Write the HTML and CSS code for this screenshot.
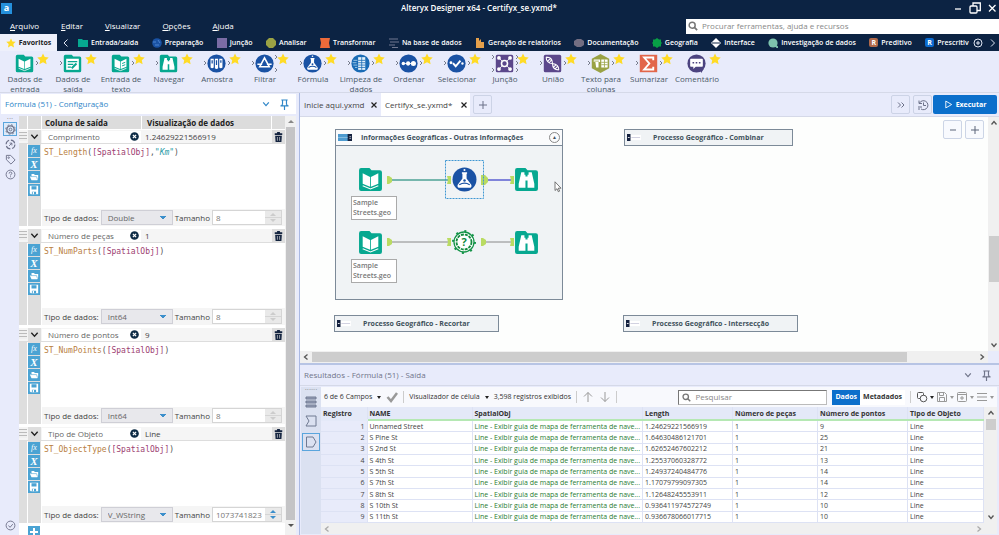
FILE: index.html
```html
<!DOCTYPE html>
<html lang="pt-BR">
<head>
<meta charset="utf-8">
<title>Alteryx Designer x64 - Certifyx_se.yxmd*</title>
<link rel="stylesheet" href="styles.css">
</head>
<body>
<svg class="sprite" aria-hidden="true">
  <symbol id="star" viewBox="0 0 12 12"><path fill="#ffdb26" d="M6 .5 7.7 4.1 11.7 4.6 8.8 7.3 9.6 11.3 6 9.3 2.4 11.3 3.2 7.3.3 4.6 4.3 4.1z"/></symbol>
  <symbol id="search" viewBox="0 0 12 12"><circle cx="5" cy="5" r="3.6" fill="none" stroke="#777" stroke-width="1.8"/><path d="M7.7 7.7 11 11" stroke="#777" stroke-width="2"/></symbol>
  <symbol id="folder" viewBox="0 0 24 24"><path fill="#06a890" d="M1 3q0-2 2-2h8l2 2h8q2 0 2 2v16q0 2-2 2H3q-2 0-2-2z"/></symbol>
  <symbol id="book" viewBox="0 0 24 24"><use href="#folder"/><path fill="#fff" d="M4.500 6 11.600 9.500V19L4.500 16zM19.500 6l-7.100 3.500V19l7.100-3z"/><path d="M4.500 18 12 21l7.500-3" fill="none" stroke="#fff"/></symbol>
  <symbol id="write" viewBox="0 0 24 24"><use href="#folder"/><path fill="#fff" d="M4 6h16v14H4z"/><path d="M6 9.500h12M6 13h7M6 16.500h4" stroke="#06a890" stroke-width="1.600"/><path d="m11 18 6-6" stroke="#06a890" stroke-width="2.600"/></symbol>
  <symbol id="textin" viewBox="0 0 24 24"><use href="#book"/><path d="M14 12l4-1.500M14 15l4-1.500" stroke="#06a890" stroke-width="1.200"/></symbol>
  <symbol id="binoc" viewBox="0 0 24 24"><use href="#folder"/><path fill="#fff" d="M7 5h3v2.500h1V20H4.500v-4zM14 5h3l2.500 11v4H13V7.500h1zM10.500 9h3v4h-3z"/></symbol>
  <symbol id="sample" viewBox="0 0 24 24"><circle cx="12" cy="12" r="11.500" fill="#1a52a4"/><path fill="#fff" d="M4.500 6h4v11q-2 2-4 0zM10 6h4v12q-2 2-4 0zM15.500 6h4v11q-2 2-4 0z"/><path d="M6.500 8v4M12 8v6M17.500 8v3" stroke="#1a52a4" stroke-width="1.600"/></symbol>
  <symbol id="filter" viewBox="0 0 24 24"><circle cx="12" cy="12" r="11.500" fill="#1a52a4"/><path d="M12 5 18 16H6zM3 13h6M15 13h6" fill="none" stroke="#fff" stroke-width="2"/></symbol>
  <symbol id="flask" viewBox="0 0 24 24"><circle cx="12" cy="12" r="11.500" fill="#1a52a4"/><path fill="#fff" d="M9.500 5h5v1.500H14V11l4.500 6q1 3-2 3h-9q-3 0-2-3L10 11V6.500h-.5z"/><path d="M7 17q5-3 10 0" fill="none" stroke="#1a52a4" stroke-width="1.300"/><circle cx="12" cy="13" r="1.200" fill="#1a52a4"/><circle cx="12" cy="2.800" r="1" fill="#fff"/></symbol>
  <symbol id="cleanse" viewBox="0 0 24 24"><circle cx="12" cy="12" r="11.500" fill="#1a6bb5"/><path fill="#e4f1fa" d="M9 4h9v16H9z"/><path d="M9 8h9M9 11h9M9 14h9M9 17h9M13.500 4v16" stroke="#1a6bb5"/><path d="M3 8h5M2 11h5M3 14h5M5 17h3" stroke="#b8dcf2"/></symbol>
  <symbol id="sort" viewBox="0 0 24 24"><circle cx="12" cy="12" r="11.500" fill="#1a52a4"/><path d="M5 12h14" stroke="#fff"/><circle cx="5.500" cy="12" r="2.200" fill="#fff"/><circle cx="11.500" cy="12" r="2.700" fill="#fff"/><circle cx="18.200" cy="12" r="3.200" fill="#fff"/></symbol>
  <symbol id="select" viewBox="0 0 24 24"><circle cx="12" cy="12" r="11.500" fill="#1a52a4"/><circle cx="5" cy="11" r="1.800" fill="#fff"/><circle cx="19.500" cy="12" r="1.500" fill="#fff"/><path d="m7.500 11.500 3.500 4 6-7" fill="none" stroke="#fff" stroke-width="2.500"/></symbol>
  <symbol id="join" viewBox="0 0 24 24"><rect x="1" y="1" width="22" height="22" rx="2" fill="#5b478b"/><path d="m5 5 14 14M19 5 5 19" stroke="#fff"/><circle cx="12" cy="12" r="3.800" fill="#5b478b" stroke="#fff" stroke-width="2"/><g fill="#fff"><circle cx="5" cy="5" r="2.400"/><circle cx="19" cy="5" r="2.400"/><circle cx="5" cy="19" r="2.400"/><circle cx="19" cy="19" r="2.400"/></g></symbol>
  <symbol id="union" viewBox="0 0 24 24"><rect x="1" y="1" width="22" height="22" rx="2" fill="#5b478b"/><path d="M4 4q0 7 8 8t8 8M4 4q8 0 8 8t8 8M6 9l4-4M8 11l3-4M13 17l4-4M15 19l4-4" fill="none" stroke="#fff" stroke-width="1.400"/></symbol>
  <symbol id="columns" viewBox="0 0 24 24"><path fill="#9aa244" d="M12 0 23 6v12l-11 6L1 18V6z"/><path fill="#fff" d="M3.500 7h8v3h-2v7h-3l-1-7h-2zM13 7h8v10h-8z"/><path d="M13 10.500h8M13 13.500h8M17 7v10M4 9h6" stroke="#9aa244"/></symbol>
  <symbol id="sum" viewBox="0 0 24 24"><path fill="#e2664b" d="M1 1h22v22H1z"/><path d="M18 8V4.500H6.500L13 12l-6.500 7.500H18V16" fill="none" stroke="#fff" stroke-width="2.400"/></symbol>
  <symbol id="comment" viewBox="0 0 24 24"><circle cx="12" cy="12" r="11.500" fill="#4c4480"/><path fill="#fff" d="M5 6h14q1 0 1 1v8q0 1-1 1H11l-3 3v-3H5q-1 0-1-1V7q0-1 1-1z"/><path d="M7 11h2M11 11h2M15 11h2" stroke="#4c4480" stroke-width="2"/><path d="M16 19h5l-3 5z" fill="#4c4480"/></symbol>
  <symbol id="anchor" viewBox="0 0 4 6"><path d="m1 1 2 2-2 2" fill="none" stroke="#777c8c"/></symbol>
  <symbol id="chev" viewBox="0 0 10 10"><path d="m1.500 3 3.500 4 3.500-4" fill="none" stroke="currentColor" stroke-width="1.500"/></symbol>
  <symbol id="pin" viewBox="0 0 10 12"><path d="M1.500 1h7M2.800 1v5M7.200 1v5M.5 7.500h9M2.800 6 1.500 7.500M7.200 6l1.300 1.500M5 7.500V12" fill="none" stroke="currentColor" stroke-width="1.300"/></symbol>
  <symbol id="trash" viewBox="0 0 10 12"><path fill="#13233f" d="M3.500 0h3l.5 1.500h2.500V3.500h-9V1.500H3zM1 4.500h8L8.500 12h-7z"/><path d="M3.700 6v4.500M6.300 6v4.500" stroke="#ddd" stroke-width=".8"/></symbol>
  <symbol id="clear" viewBox="0 0 10 10"><circle cx="5" cy="5" r="4.800" fill="#0d2b45"/><path d="m3.200 3.200 3.600 3.600M6.800 3.200 3.200 6.800" stroke="#fff" stroke-width="1.400"/></symbol>
  <symbol id="open" viewBox="0 0 12 12"><path fill="#fff" d="M3 2.500h3l1 1h4v4l-1 2.500H3L1 5.500h2z"/><path d="M2 5.500h7l1 3" fill="none" stroke="#4ba3d3" stroke-width=".7"/></symbol>
  <symbol id="save" viewBox="0 0 12 12"><path fill="#fff" d="M1 1h10v10H2l-1-1z"/><path fill="#4ba3d3" d="M3 1.500h6v4H3zM3.500 8h5v3h-5z"/><path fill="#fff" d="M4.500 8.500h1.500V11H4.500z"/></symbol>
  <symbol id="collapse" viewBox="0 0 16 8"><path fill="#4d9bd0" d="M0 0h16v8H0z"/><path fill="#14213f" d="M11 0h5v8h-5z"/><path d="M0 4h11" stroke="#a9d3ec" stroke-width=".7"/><path d="M13 3h2M13 5h2" stroke="#fff" stroke-width=".7"/></symbol>
  <symbol id="closed" viewBox="0 0 16 8"><path fill="#fff" d="M4 1h12v6H4z"/><path fill="#14213f" d="M0 0h4v8H0z"/><path d="M5 4h10" stroke="#ccd"/><path d="M1 4h2" stroke="#fff"/></symbol>
</svg>

<div class="app">
  <header class="top">
    <div class="titlebar">
      <span class="logo">a</span>
      <h1>Alteryx Designer x64 - Certifyx_se.yxmd*</h1>
      <div class="win">
        <button aria-label="Minimizar"><svg viewBox="0 0 12 12"><path d="M3 7h6"/></svg></button>
        <button aria-label="Restaurar"><svg viewBox="0 0 12 12"><rect x="1" y="4" width="7" height="7" rx="1"/><path d="M4 4V1h7.300v7.500H8"/></svg></button>
        <button aria-label="Fechar"><svg viewBox="0 0 12 12"><path d="m3 3 6.500 6.500M9.500 3 3 9.500"/></svg></button>
      </div>
    </div>
    <div class="menurow">
      <nav class="menu"><a href="#"><u>A</u>rquivo</a><a href="#"><u>E</u>ditar</a><a href="#"><u>V</u>isualizar</a><a href="#"><u>O</u>pções</a><a href="#"><u>A</u>juda</a></nav>
      <label class="topsearch"><svg><use href="#search"/></svg><input type="text" placeholder="Procurar ferramentas, ajuda e recursos" aria-label="Procurar"></label>
    </div>
    <div class="cats">
      <button class="fav"><svg><use href="#star"/></svg>Favoritos</button>
      <button class="arrow" aria-label="Anterior"><svg viewBox="0 0 10 10"><path d="M6.500 1.500 3 5l3.500 3.500"/></svg></button>
      <div class="catlist">
        <button><svg viewBox="0 0 10 10"><path fill="#06a890" d="M0 1h4l1 1h5v7H0z"/></svg>Entrada/saída</button>
        <button><svg viewBox="0 0 10 10"><circle cx="5" cy="5" r="4.800" fill="#1a52a4"/><path d="M1 4h3M6 2l2 3M3 7h4" stroke="#4d84cf"/></svg>Preparação</button>
        <button><svg viewBox="0 0 10 10"><path fill="#7a6ca5" d="M0 0h10v10H0z"/></svg>Junção</button>
        <button><svg viewBox="0 0 10 10"><path fill="#9aa244" d="M3 0h4l3 3v4l-3 3H3L0 7V3z"/></svg>Analisar</button>
        <button><svg viewBox="0 0 10 10"><path fill="#ec6a3a" d="M0 0h10l-1 5 1 5H0l1-5z"/></svg>Transformar</button>
        <button><svg viewBox="0 0 10 10"><path d="M0 1h9M1 4h9M0 7h6M3 9.500h6" stroke="#707891" stroke-width="1.200"/></svg>Na base de dados</button>
        <button><svg viewBox="0 0 10 10"><path fill="#e5a04b" d="M1 0h3v3l2-2v3h3v6H1z"/></svg>Geração de relatórios</button>
        <button><svg viewBox="0 0 10 10"><path fill="#736e82" d="M3 1h4l3 2v4L7 9H3L0 7V3z"/></svg>Documentação</button>
        <button><svg viewBox="0 0 10 10"><path fill="#08a046" d="m5 0 2 1.500h2V4l1 1-1 1v2.500H7L5 10 3 8.500H1V6L0 5l1-1V1.500h2z"/></svg>Geografia</button>
        <button><svg viewBox="0 0 10 10"><path fill="#fff" d="m5 0 4 4H1zM5 10 1 6h8zM0 4h10v.6H0zM0 5.600h10v.5H0z"/></svg>Interface</button>
        <button><svg viewBox="0 0 10 10"><circle cx="5" cy="5" r="4.600" fill="#7dc3ae"/><path d="m7 7 3 3" stroke="#7dc3ae" stroke-width="2"/></svg>Investigação de dados</button>
        <button><span class="rmark brown">R</span>Preditivo</button>
        <button><span class="rmark blue">R</span>Prescritiv</button>
      </div>
      <button class="arrow" aria-label="Adicionar"><svg viewBox="0 0 10 10"><circle cx="5" cy="5" r="4"/><path d="M5 3v4M3 5h4"/></svg></button>
      <button class="arrow last" aria-label="Próximo"><svg viewBox="0 0 10 10"><path d="M3 1.500 6.500 5 3 8.500"/></svg></button>
    </div>
  </header>

  <div class="ribbon">
    <button class="tool"><svg viewBox="0 0 48 22"><use href="#book" x="14" y="2" width="19" height="19"/><use href="#anchor" x="34" y="8" width="4" height="6"/><use href="#star" x="36" y="1" width="12" height="12"/></svg>Dados de<br>entrada</button>
    <button class="tool"><svg viewBox="0 0 48 22"><use href="#anchor" x="10" y="8" width="4" height="6"/><use href="#write" x="14" y="2" width="19" height="19"/><use href="#star" x="36" y="1" width="12" height="12"/></svg>Dados de<br>saída</button>
    <button class="tool"><svg viewBox="0 0 48 22"><use href="#textin" x="14" y="2" width="19" height="19"/><use href="#anchor" x="34" y="8" width="4" height="6"/><use href="#star" x="36" y="1" width="12" height="12"/></svg>Entrada de<br>texto</button>
    <button class="tool"><svg viewBox="0 0 48 22"><use href="#anchor" x="10" y="8" width="4" height="6"/><use href="#binoc" x="14" y="2" width="19" height="19"/><use href="#star" x="36" y="1" width="12" height="12"/></svg>Navegar</button>
    <button class="tool"><svg viewBox="0 0 48 22"><use href="#anchor" x="10" y="8" width="4" height="6"/><use href="#sample" x="14" y="2" width="19" height="19"/><use href="#anchor" x="34" y="8" width="4" height="6"/><use href="#star" x="36" y="1" width="12" height="12"/></svg>Amostra</button>
    <button class="tool"><svg viewBox="0 0 48 22"><use href="#anchor" x="10" y="8" width="4" height="6"/><use href="#filter" x="14" y="2" width="19" height="19"/><use href="#anchor" x="33" y="2" width="4" height="6"/><use href="#anchor" x="33" y="15" width="4" height="6"/><use href="#star" x="36" y="1" width="12" height="12"/></svg>Filtrar</button>
    <button class="tool"><svg viewBox="0 0 48 22"><use href="#anchor" x="10" y="8" width="4" height="6"/><use href="#flask" x="14" y="2" width="19" height="19"/><use href="#anchor" x="34" y="8" width="4" height="6"/><use href="#star" x="36" y="1" width="12" height="12"/></svg>Fórmula</button>
    <button class="tool"><svg viewBox="0 0 48 22"><use href="#anchor" x="10" y="8" width="4" height="6"/><use href="#cleanse" x="14" y="2" width="19" height="19"/><use href="#anchor" x="34" y="8" width="4" height="6"/><use href="#star" x="36" y="1" width="12" height="12"/></svg>Limpeza de<br>dados</button>
    <button class="tool"><svg viewBox="0 0 48 22"><use href="#anchor" x="10" y="8" width="4" height="6"/><use href="#sort" x="14" y="2" width="19" height="19"/><use href="#anchor" x="34" y="8" width="4" height="6"/><use href="#star" x="36" y="1" width="12" height="12"/></svg>Ordenar</button>
    <button class="tool"><svg viewBox="0 0 48 22"><use href="#anchor" x="10" y="8" width="4" height="6"/><use href="#select" x="14" y="2" width="19" height="19"/><use href="#anchor" x="34" y="8" width="4" height="6"/><use href="#star" x="36" y="1" width="12" height="12"/></svg>Selecionar</button>
    <button class="tool"><svg viewBox="0 0 48 22"><use href="#anchor" x="10" y="2" width="4" height="6"/><use href="#anchor" x="10" y="15" width="4" height="6"/><use href="#join" x="14" y="2" width="19" height="19"/><use href="#anchor" x="34" y="2" width="4" height="6"/><use href="#anchor" x="34" y="8" width="4" height="6"/><use href="#anchor" x="34" y="15" width="4" height="6"/><use href="#star" x="36" y="1" width="12" height="12"/></svg>Junção</button>
    <button class="tool"><svg viewBox="0 0 48 22"><use href="#anchor" x="10" y="8" width="4" height="6"/><use href="#union" x="14" y="2" width="19" height="19"/><use href="#anchor" x="34" y="8" width="4" height="6"/><use href="#star" x="36" y="1" width="12" height="12"/></svg>União</button>
    <button class="tool"><svg viewBox="0 0 48 22"><use href="#anchor" x="10" y="8" width="4" height="6"/><use href="#columns" x="14" y="2" width="19" height="19"/><use href="#anchor" x="34" y="8" width="4" height="6"/><use href="#star" x="36" y="1" width="12" height="12"/></svg>Texto para<br>colunas</button>
    <button class="tool"><svg viewBox="0 0 48 22"><use href="#anchor" x="10" y="8" width="4" height="6"/><use href="#sum" x="14" y="2" width="19" height="19"/><use href="#anchor" x="34" y="8" width="4" height="6"/><use href="#star" x="36" y="1" width="12" height="12"/></svg>Sumarizar</button>
    <button class="tool"><svg viewBox="0 0 48 22"><use href="#comment" x="14" y="2" width="19" height="19"/><use href="#star" x="36" y="1" width="12" height="12"/></svg>Comentário</button>
  </div>

  <main class="work">
    <section class="config">
      <div class="ptitle"><h2>Fórmula (51) - Configuração</h2><svg class="chevi"><use href="#chev"/></svg><svg class="pini"><use href="#pin"/></svg></div>
      <div class="cbody">
        <div class="rail">
          <span class="dots">···</span>
          <button class="on" aria-label="Configuração"><svg viewBox="0 0 12 12"><circle cx="6" cy="6" r="4" stroke-width="1.500"/><circle cx="6" cy="6" r="5.200" stroke-dasharray="2 2.080"/><circle cx="6" cy="6" r="1.500"/></svg></button>
          <button aria-label="Navegação"><svg viewBox="0 0 12 12"><circle cx="6" cy="6" r="4.800" stroke-dasharray="5.500 2" stroke-width="1.200"/><path d="m4.500 7.500 3-3M5 4.500h2.500V7"/></svg></button>
          <button aria-label="Anotação"><svg viewBox="0 0 12 12"><path d="M1.500 1.500h4.700l4.800 5-4.500 4.500-5-4.800z"/><circle cx="4" cy="4" r=".8"/></svg></button>
          <button aria-label="Ajuda"><svg viewBox="0 0 12 12"><circle cx="6" cy="6" r="4.800"/><path d="M4.500 5q0-1.700 1.500-1.700T7.500 4.800Q7.500 5.800 6 6.300V7M6 8v1"/></svg></button>
          <span class="grow"></span>
          <button aria-label="Concluído"><svg viewBox="0 0 12 12"><circle cx="6" cy="6" r="4.800"/><path d="m3.800 6 1.700 2 3-3.500"/></svg></button>
        </div>
        <div class="formulas">
          <div class="fhead"><span></span><span></span><span>Coluna de saída</span><span>Visualização de dados</span><span></span></div>
          <div class="fblock">
            <div class="frow"><i class="grip"></i><button class="tog" aria-label="Recolher"><svg><use href="#chev"/></svg></button><div class="name"><input type="text" value="Comprimento" aria-label="Coluna de saída"><button aria-label="Limpar"><svg><use href="#clear"/></svg></button></div><output>1.24629221566919</output><button class="del" aria-label="Excluir"><svg><use href="#trash"/></svg></button></div>
            <div class="fedit"><i></i><div class="ftools"><button>fx</button><button class="x">X</button><button aria-label="Abrir"><svg><use href="#open"/></svg></button><button aria-label="Salvar"><svg><use href="#save"/></svg></button></div>
              <div class="fmain"><pre><code><b>ST_Length</b>(<em>[SpatialObj]</em>,<q>"Km"</q>)</code></pre>
                <div class="ftype"><label for="t1">Tipo de dados:</label><select id="t1"><option>Double</option></select><label for="s1">Tamanho</label><span class="spin"><input id="s1" type="text" value="8"><i></i></span></div></div></div>
          </div>
          <div class="fblock">
            <div class="frow"><i class="grip"></i><button class="tog" aria-label="Recolher"><svg><use href="#chev"/></svg></button><div class="name"><input type="text" value="Número de peças" aria-label="Coluna de saída"><button aria-label="Limpar"><svg><use href="#clear"/></svg></button></div><output>1</output><button class="del" aria-label="Excluir"><svg><use href="#trash"/></svg></button></div>
            <div class="fedit"><i></i><div class="ftools"><button>fx</button><button class="x">X</button><button aria-label="Abrir"><svg><use href="#open"/></svg></button><button aria-label="Salvar"><svg><use href="#save"/></svg></button></div>
              <div class="fmain"><pre><code><b>ST_NumParts</b>(<em>[SpatialObj]</em>)</code></pre>
                <div class="ftype"><label for="t2">Tipo de dados:</label><select id="t2"><option>Int64</option></select><label for="s2">Tamanho</label><span class="spin"><input id="s2" type="text" value="8"><i></i></span></div></div></div>
          </div>
          <div class="fblock">
            <div class="frow"><i class="grip"></i><button class="tog" aria-label="Recolher"><svg><use href="#chev"/></svg></button><div class="name"><input type="text" value="Número de pontos" aria-label="Coluna de saída"><button aria-label="Limpar"><svg><use href="#clear"/></svg></button></div><output>9</output><button class="del" aria-label="Excluir"><svg><use href="#trash"/></svg></button></div>
            <div class="fedit"><i></i><div class="ftools"><button>fx</button><button class="x">X</button><button aria-label="Abrir"><svg><use href="#open"/></svg></button><button aria-label="Salvar"><svg><use href="#save"/></svg></button></div>
              <div class="fmain"><pre><code><b>ST_NumPoints</b>(<em>[SpatialObj]</em>)</code></pre>
                <div class="ftype"><label for="t3">Tipo de dados:</label><select id="t3"><option>Int64</option></select><label for="s3">Tamanho</label><span class="spin"><input id="s3" type="text" value="8"><i></i></span></div></div></div>
          </div>
          <div class="fblock">
            <div class="frow"><i class="grip"></i><button class="tog" aria-label="Recolher"><svg><use href="#chev"/></svg></button><div class="name"><input type="text" value="Tipo de Objeto" aria-label="Coluna de saída"><button aria-label="Limpar"><svg><use href="#clear"/></svg></button></div><output>Line</output><button class="del" aria-label="Excluir"><svg><use href="#trash"/></svg></button></div>
            <div class="fedit"><i></i><div class="ftools"><button>fx</button><button class="x">X</button><button aria-label="Abrir"><svg><use href="#open"/></svg></button><button aria-label="Salvar"><svg><use href="#save"/></svg></button></div>
              <div class="fmain"><pre><code><b>ST_ObjectType</b>(<em>[SpatialObj]</em>)</code></pre>
                <div class="ftype"><label for="t4">Tipo de dados:</label><select id="t4"><option>V_WString</option></select><label for="s4">Tamanho</label><span class="spin live"><input id="s4" type="text" value="1073741823"><i></i></span></div></div></div>
          </div>
          <div class="fadd"><i></i><button aria-label="Adicionar coluna"><svg viewBox="0 0 12 12"><path d="M6 2v8M2 6h8" stroke="#fff" stroke-width="2"/></svg></button></div>
        </div>
        <div class="vbar"><i class="up"></i><b></b><i class="down"></i></div>
      </div>
    </section>

    <div class="right">
      <div class="tabs">
        <div class="tab"><a href="#">Inicie aqui.yxmd</a><button aria-label="Fechar"><svg viewBox="0 0 8 8"><path d="m1.500 1.500 5 5M6.500 1.500l-5 5"/></svg></button></div>
        <div class="tab active"><a href="#">Certifyx_se.yxmd*</a><button aria-label="Fechar"><svg viewBox="0 0 8 8"><path d="m1.500 1.500 5 5M6.500 1.500l-5 5"/></svg></button></div>
        <button class="sq" aria-label="Nova aba"><svg viewBox="0 0 12 12"><path d="M6 2v8M2 6h8"/></svg></button>
        <span class="grow"></span>
        <button class="sq" aria-label="Mais"><svg viewBox="0 0 12 12"><path d="m3 3.500 2.500 2.500L3 8.500M6.500 3.500 9 6 6.500 8.500"/></svg></button>
        <button class="sq" aria-label="Histórico"><svg viewBox="0 0 12 12"><path d="M2.500 4A4.500 4.500 0 1 1 4 10M2 1.500v3h3M6.500 3.500V6.500H9M1 8h4M1 10h2"/></svg></button>
        <button class="run"><svg viewBox="0 0 10 10"><path d="M2 1.200 8.500 5 2 8.800z"/></svg>Executar</button>
      </div>
      <div class="canvaswrap">
        <div class="canvas">
          <div class="box open">
            <div class="boxhead"><svg><use href="#collapse"/></svg><h3>Informações Geográficas - Outras Informações</h3><button aria-label="Recolher">▲</button></div>
          </div>
          <svg class="wires" viewBox="0 0 228 170">
            <path d="M55 51h60" stroke="#4ea295" stroke-width="1.500"/><path d="M150 51h26" stroke="#5b5fd0" stroke-width="1.500"/>
            <path d="M55 113h60M150 113h26" stroke="#888"/>
            <g fill="#b9db62"><path d="M51 47h2l3 2v4l-3 2h-2zM111 47h4v8h-4l1-4zM174 47h4v8h-4l1-4zM145 46h4l3 3v4l-3 3h-4zM51 109h2l3 2v4l-3 2h-2zM111 109h4v8h-4l1-4zM174 109h4v8h-4l1-4zM145 109h2l3 2v4l-3 2h-2z"/></g>
            <rect x="109.500" y="31.500" width="38" height="38" fill="none" stroke="#3f97d2" stroke-dasharray="2 1"/>
            <use href="#book" x="22" y="38" width="25" height="25"/><use href="#book" x="22" y="101" width="25" height="25"/>
            <use href="#flask" x="116" y="38" width="25" height="25"/>
            <use href="#binoc" x="178" y="38" width="25" height="25"/><use href="#binoc" x="178" y="101" width="25" height="25"/>
            <circle cx="128" cy="113" r="10" fill="#fff" stroke="#159449" stroke-width="1.300"/><circle cx="128" cy="113" r="11" fill="none" stroke="#159449" stroke-width="2" stroke-dasharray="2 6.640"/><circle cx="128" cy="113" r="7.500" fill="none" stroke="#128a3e" stroke-width="1.800" stroke-dasharray="3 1"/>
            <text x="128" y="117" text-anchor="middle" class="q">?</text>
          </svg>
          <div class="note n1">Sample<br>Streets.geo</div>
          <div class="note n2">Sample<br>Streets.geo</div>
          <div class="box b1"><svg><use href="#closed"/></svg><h3>Processo Geográfico - Combinar</h3></div>
          <div class="box b2"><svg><use href="#closed"/></svg><h3>Processo Geográfico - Recortar</h3></div>
          <div class="box b3"><svg><use href="#closed"/></svg><h3>Processo Geográfico - Intersecção</h3></div>
          <div class="zoomer"><button aria-label="Diminuir"><svg viewBox="0 0 12 12"><path d="M3 6h6"/></svg></button><button aria-label="Aumentar"><svg viewBox="0 0 12 12"><path d="M6 2v8M2 6h8"/></svg></button></div>
          <svg class="cursor" viewBox="0 0 8 12"><path d="M1 .8v8.700l2-1.800 1.300 3 1.300-.6-1.300-2.900H7z" fill="#fff" stroke="#555" stroke-width=".8"/></svg>
        </div>
        <div class="cv"><svg viewBox="0 0 8 8"><path d="m1.500 5.500 2.500-3 2.500 3"/></svg><b></b><svg viewBox="0 0 8 8"><path d="m1.500 2.500 2.500 3 2.500-3"/></svg></div>
        <div class="ch"><svg viewBox="0 0 8 8"><path d="M5.500 1.500 2.500 4l3 2.500"/></svg><b></b><svg viewBox="0 0 8 8"><path d="m2.500 1.500 3 2.500-3 2.500"/></svg></div>
      </div>

      <section class="results">
        <div class="rtitle"><h2>Resultados - Fórmula (51) - Saída</h2><svg class="chevi"><use href="#chev"/></svg><svg class="pini"><use href="#pin"/></svg></div>
        <div class="rbody">
          <div class="rrail">
            <span class="dots">······</span>
            <button aria-label="Mensagens"><svg viewBox="0 0 12 12"><path d="M1 1h10v2H1zM1 5h10v2H1zM1 9h10v2H1z" fill="#9aa2bb"/></svg></button>
            <button aria-label="Entrada"><svg viewBox="0 0 12 12"><path d="M1 1h10v10H1l3-5z"/></svg></button>
            <button class="on" aria-label="Saída"><svg viewBox="0 0 12 12"><path d="M1.500 1H8l3 5-3 5H1.500z"/></svg></button>
          </div>
          <div class="rmain">
            <div class="rbar">
              <button>6 de 6 Campos</button><i class="car"></i>
              <svg class="ok" viewBox="0 0 12 12"><path d="m1.500 6 3.500 4 6-8" stroke="#999" stroke-width="2.500"/></svg><s></s>
              <button>Visualizador de célula</button><i class="car"></i>
              <span>3,598 registros exibidos</span><s></s>
              <svg viewBox="0 0 12 12"><path d="M6 11V1.500M2 5.500l4-4 4 4"/></svg><svg viewBox="0 0 12 12"><path d="M6 1v9.500M2 6.500l4 4 4-4"/></svg><s></s>
              <span class="grow"></span>
              <label class="rsearch"><svg><use href="#search"/></svg><input type="text" placeholder="Pesquisar" aria-label="Pesquisar"></label>
              <div class="seg"><button class="sel">Dados</button><button>Metadados</button></div><s></s>
              <div class="acts">
                <svg class="dark" viewBox="0 0 12 12"><rect x="1.500" y="1.500" width="6" height="6" rx="1"/><circle cx="7.500" cy="7.500" r="3.300" fill="#f8f9fd"/></svg><i class="car"></i>
                <svg viewBox="0 0 12 12"><path d="M1.500 1.500h7l2 2v7h-9zM3.500 1.500v3h4v-3M3.500 10.500v-4h5v4"/></svg><i class="car dim"></i>
                <svg viewBox="0 0 12 12"><rect x="1.500" y="1.500" width="9" height="9" rx="1"/><path d="M1.500 3.500h9M6 5v4M4 7h4"/></svg><i class="car dim"></i>
                <svg viewBox="0 0 12 12"><path d="M1 2.500h10M1 6h10M1 9.500h10"/></svg><i class="car dim"></i>
              </div>
            </div>
            <div class="grid">
              <table>
                <colgroup><col class="c0"><col class="c1"><col class="c2"><col class="c3"><col class="c4"><col class="c5"><col class="c6"></colgroup>
                <thead><tr><th>Registro</th><th>NAME</th><th>SpatialObj</th><th>Length</th><th>Número de peças</th><th>Número de pontos</th><th>Tipo de Objeto</th></tr></thead>
                <tbody>
                <tr><td>1</td><td>Unnamed Street</td><td>Line - Exibir guia de mapa de ferramenta de nave...</td><td>1.24629221566919</td><td>1</td><td>9</td><td>Line</td></tr>
                <tr><td>2</td><td>S Pine St</td><td>Line - Exibir guia de mapa de ferramenta de nave...</td><td>1.64630486121701</td><td>1</td><td>25</td><td>Line</td></tr>
                <tr><td>3</td><td>S 2nd St</td><td>Line - Exibir guia de mapa de ferramenta de nave...</td><td>1.62652467602212</td><td>1</td><td>21</td><td>Line</td></tr>
                <tr><td>4</td><td>S 4th St</td><td>Line - Exibir guia de mapa de ferramenta de nave...</td><td>1.25537060328772</td><td>1</td><td>13</td><td>Line</td></tr>
                <tr><td>5</td><td>S 5th St</td><td>Line - Exibir guia de mapa de ferramenta de nave...</td><td>1.24937240484776</td><td>1</td><td>14</td><td>Line</td></tr>
                <tr><td>6</td><td>S 7th St</td><td>Line - Exibir guia de mapa de ferramenta de nave...</td><td>1.17079799097305</td><td>1</td><td>14</td><td>Line</td></tr>
                <tr><td>7</td><td>S 8th St</td><td>Line - Exibir guia de mapa de ferramenta de nave...</td><td>1.12648245553911</td><td>1</td><td>12</td><td>Line</td></tr>
                <tr><td>8</td><td>S 10th St</td><td>Line - Exibir guia de mapa de ferramenta de nave...</td><td>0.936411974572749</td><td>1</td><td>10</td><td>Line</td></tr>
                <tr><td>9</td><td>S 11th St</td><td>Line - Exibir guia de mapa de ferramenta de nave...</td><td>0.936678066017715</td><td>1</td><td>10</td><td>Line</td></tr>
                </tbody>
              </table>
              <div class="gv"><svg viewBox="0 0 8 8"><path d="m1.500 5.500 2.500-3 2.500 3"/></svg><b></b><svg viewBox="0 0 8 8"><path d="m1.500 2.500 2.500 3 2.500-3"/></svg></div>
            </div>
            <div class="gh"><svg viewBox="0 0 8 8"><path d="M5.500 1.500 2.500 4l3 2.500"/></svg><svg viewBox="0 0 8 8"><path d="m2.500 1.500 3 2.500-3 2.500"/></svg></div>
          </div>
        </div>
      </section>
    </div>
  </main>
</div>
</body>
</html>
```
FILE: styles.css
```css
* { box-sizing: border-box; }
body { margin: 0; font-family: "Open Sans", "Noto Sans", sans-serif; font-size: 8px; line-height: 10px; color: #444; }
button, input, select { font: inherit; color: inherit; border: 0; padding: 0; margin: 0; background: none; border-radius: 0; min-width: 0; }
button { display: flex; align-items: center; justify-content: center; }
input { outline: 0; width: 100%; }
h1, h2, h3 { margin: 0; font-size: inherit; font-weight: 400; }
a { color: inherit; text-decoration: none; }
svg { display: block; flex: none; width: 12px; height: 12px; fill: none; stroke-width: 1; }
.sprite { position: absolute; width: 0; height: 0; }
.grow { flex: 1; }
.app { display: flex; flex-direction: column; height: 100vh; background: #e8ebfb; }

/* Header */
.top { background: #0c2343; color: #fff; }
.titlebar { display: flex; align-items: center; height: 16px; padding: 0 1px; }
.logo { width: 11px; height: 11px; background: #2590dc; font-size: 9px; font-weight: 700; text-align: center; }
.titlebar h1 { flex: 1; text-align: center; font-weight: 600; padding-right: 6px; }
.win { display: flex; gap: 5px; }
.win svg { stroke: #fff; stroke-width: 1.3; }
.menurow { display: flex; align-items: center; justify-content: space-between; height: 18px; padding-top: 2px; }
.menu { display: flex; gap: 22px; padding-left: 10px; }
.topsearch { display: flex; align-items: center; gap: 4px; width: 313px; height: 15px; padding-left: 2px; background: #fff; color: #777; }
.topsearch svg { width: 10px; height: 10px; }
::placeholder { color: #888; opacity: 1; }
.cats { display: flex; align-items: stretch; height: 17px; font-size: 7px; font-weight: 600; }
.cats svg { width: 10px; height: 10px; }
.cats button { gap: 3px; white-space: nowrap; }
.fav { width: 57px; background: #eef0fb; color: #222; font-weight: 700; }
.arrow { width: 17px; }
.arrow.last { width: 13px; }
.arrow svg { stroke: #dfe5f2; }
.catlist { display: flex; flex: 1; justify-content: space-between; padding-left: 4px; }
.rmark { width: 9px; height: 9px; line-height: 9px; font-weight: 700; text-align: center; border-radius: 2px; flex: none; }
.brown { background: #b0694a; }
.blue { background: #0b6bd0; }

/* Tool ribbon */
.ribbon { display: flex; height: 42px; padding-left: 1px; border-bottom: 1px solid #d5d9e8; }
.tool { flex: none; display: block; width: 48px; text-align: center; line-height: 9px; align-self: flex-start; padding-top: 1px; color: #4b5a68; white-space: nowrap; }
.tool svg { width: 48px; height: 22px; }

/* Work area */
.work { display: flex; flex: 1; min-height: 0; }
.config { flex: none; display: flex; flex-direction: column; width: 300px; padding: 1px 3px 0 1px; border-right: 1px solid #aab9e2; }
.ptitle, .rtitle { display: flex; align-items: center; gap: 10px; flex: none; }
.ptitle { height: 20px; background: #fff; color: #2e86c8; padding: 0 7px 0 4px; }
.ptitle h2, .rtitle h2 { flex: 1; }
.chevi { width: 8px; height: 8px; }
.pini { width: 9px; height: 11px; }
.cbody { display: flex; flex: 1; min-height: 0; padding-top: 2px; }
.rail { display: flex; flex-direction: column; align-items: center; gap: 1px; width: 18px; padding-bottom: 3px; color: #6a6f86; }
.rail button { width: 14px; height: 14px; }
.rail svg { stroke: #6d7189; width: 11px; height: 11px; }
.rail .on { border: 1px solid #5aa5dd; background: #dceafa; }
.dots { line-height: 4px; height: 5px; color: #888; }
.formulas { flex: 1; min-width: 0; background: #fff; overflow: hidden; }
.fhead, .frow { display: grid; grid-template-columns: 8px 13px 99px 1fr 13px; column-gap: 1px; height: 13px; }
.fhead { font-weight: 700; color: #222; line-height: 13px; background: #fff; }
.fhead span { background: #dcdcdc; padding-left: 3px; white-space: nowrap; }
.fhead span:nth-child(4) { padding-left: 5px; }
.fblock { padding-bottom: 2px; margin-top: 1px; }
.frow { background: #f5f5f5; height: 14px; align-items: center; border-bottom: 1px solid #ddd; }
.grip { height: 9px; background: repeating-linear-gradient(#bbb 0 1px, #f0f0f0 1px 3px); }
.tog, .del { height: 13px; background: #dedede; color: #222; }
.tog svg { width: 9px; height: 9px; }
.del svg { width: 9px; height: 10px; }
.name { display: flex; align-items: center; height: 12px; background: #fff; padding: 0 2px 0 6px; color: #666; }
.name svg { width: 9px; height: 9px; }
.frow output { padding-left: 3px; }
.fedit { display: flex; gap: 1px; height: 82px; }
.fedit > i { width: 8px; background: #dedede; }
.ftools { width: 13px; background: #dedede; display: flex; flex-direction: column; gap: 1px; padding-top: 1px; }
.ftools button, .fadd button { width: 12px; height: 12px; background: #4ba3d3; color: #fff; font: italic 8px/10px "Liberation Serif", serif; }
.ftools .x { font-size: 11px; font-weight: 700; }
.ftools svg { width: 10px; height: 10px; }
.fmain { flex: 1; min-width: 0; display: flex; flex-direction: column; }
pre { flex: 1; margin: 0; padding: 4px 2px; font: 8px/10px "DejaVu Sans Mono", monospace; color: #555; }
code { font: inherit; }
code b { font-weight: 400; color: #b9803f; }
code em { font-style: normal; color: #9c3d70; }
code q { quotes: none; font-style: italic; color: #2a9aa6; }
.ftype { display: flex; align-items: center; gap: 2px; height: 17px; padding: 0 3px 0 2px; background: #f5f5f5; white-space: nowrap; }
.ftype select { appearance: none; width: 72px; height: 15px; padding-left: 6px; border: 1px solid #cfcfd6; color: #666; background: linear-gradient(45deg, transparent 50%, #3c8fcb 50%) 58px 5px / 3px 4px no-repeat, linear-gradient(315deg, transparent 50%, #3c8fcb 50%) 61px 5px / 3px 4px no-repeat, #e8e8ec; }
.spin { display: flex; flex: 1; min-width: 0; height: 15px; border: 1px solid #d5d5d5; background: #fff; color: #777; }
.spin input { padding-left: 3px; }
.spin i { flex: none; width: 16px; background: linear-gradient(#e9e9e9 6px, #d5d5d5 6px 7px, #e9e9e9 7px); position: relative; }
.spin i::before, .spin i::after { content: ""; position: absolute; left: 5px; border: 3px solid transparent; }
.spin i::before { top: -1px; border-bottom-color: #ccc; }
.spin i::after { bottom: -1px; border-top-color: #ccc; }
.spin.live i::before { border-bottom-color: #3c8fcb; }
.spin.live i::after { border-top-color: #3c8fcb; }
.fadd { display: flex; gap: 1px; padding-top: 1px; }
.fadd i { width: 8px; }
.vbar { display: flex; flex-direction: column; align-items: center; width: 11px; background: #f1f1f1; padding: 4px 0 4px; gap: 4px; }
.vbar b { flex: 1; width: 9px; background: #c4c4c6; }
.up, .down { border: 3px solid transparent; }
.up { border-bottom-color: #888; border-top: 0; }
.down { border-top-color: #555; border-bottom: 0; margin-bottom: 4px; }

/* Tabs over the canvas */
.right { flex: 1; min-width: 0; display: flex; flex-direction: column; }
.tabs { display: flex; flex: none; align-items: center; height: 24px; border-bottom: 1px solid #d5d9e8; gap: 1px; padding-right: 2px; color: #444; }
.tab { display: flex; align-items: center; justify-content: space-between; height: 23px; width: 80px; padding: 0 2px 0 4px; white-space: nowrap; }
.tab.active { width: 89px; background: #fff; }
.tab svg { width: 8px; height: 8px; stroke: #222; stroke-width: 1.2; }
.sq { width: 19px; height: 19px; border: 1px solid #ccd3e6; border-radius: 2px; margin-left: 2px; }
.sq svg { stroke: #6b7088; }
.tabs .run { width: 64px; height: 19px; background: #0b6fcb; color: #fff; font-size: 7px; font-weight: 700; gap: 3px; border-radius: 2px; }
.run svg { width: 9px; height: 9px; stroke: #fff; }

/* Canvas */
.canvaswrap { flex: 1; min-height: 0; display: grid; grid-template: 1fr 12px / 1fr 11px; }
.canvas { position: relative; overflow: hidden; background: #fdfefd; }
.box { position: absolute; display: flex; align-items: center; height: 17px; padding-left: 2px; gap: 12px; border: 1px solid #7c8a98; background: #f0f3f5; font-weight: 700; color: #41525c; white-space: nowrap; font-size: 7px; }
.box h3 { font-weight: 700; }
.box svg { width: 14px; height: 7px; }
.box.open { left: 35px; top: 12px; width: 228px; height: 171px; display: block; padding: 0; }
.boxhead { display: flex; align-items: center; gap: 9px; height: 16px; padding: 0 2px; border-bottom: 1px solid #7c8a98; background: #fafbfc; }
.boxhead h3 { flex: 1; }
.boxhead button { width: 11px; height: 11px; border: 1px solid #888; border-radius: 50%; font-size: 5px; line-height: 5px; }
.wires { position: absolute; left: 36px; top: 12px; width: 228px; height: 170px; }
.wires .q { font: 700 11px "Open Sans", sans-serif; fill: #128a3e; stroke: none; }
.note { position: absolute; left: 51px; width: 46px; height: 24px; border: 1px solid #aaa; background: #fff; color: #777; padding: 1px; font-size: 7px; font-weight: 600; }
.n1 { top: 79px; }
.n2 { top: 142px; }
.b1 { left: 324px; top: 12px; width: 169px; }
.b2 { left: 34px; top: 198px; width: 165px; }
.b3 { left: 323px; top: 198px; width: 175px; }
.zoomer { position: absolute; right: 4px; top: 3px; display: flex; gap: 3px; }
.zoomer button { width: 19px; height: 19px; border: 1px solid #ccd5e6; background: #f8fafe; border-radius: 2px; }
.zoomer svg { stroke: #5a6478; }
.cursor { position: absolute; left: 254px; top: 64px; width: 8px; height: 12px; }
.cv, .ch, .gv, .gh { display: flex; align-items: center; background: #f0f0f0; }
.cv svg, .ch svg, .gv svg, .gh svg { width: 8px; height: 8px; stroke: #555; stroke-width: 1.3; }
.cv { flex-direction: column; padding: 2px 0; justify-content: space-between; }
.cv b { width: 10px; height: 46px; background: #cdcdcd; margin-top: 50px; }
.ch { padding: 0 2px; gap: 2px; }
.ch b { width: 87%; height: 10px; background: #cdcdcd; }
.ch svg:last-child { margin-left: auto; }

/* Results */
.results { flex: none; display: flex; flex-direction: column; height: 172px; border-top: 2px solid #b7c4e4; }
.rtitle { height: 21px; color: #70758a; padding: 0 8px 0 4px; border-bottom: 1px solid #d5d9e8; }
.rbody { display: flex; flex: 1; min-height: 0; padding: 1px 2px 1px 1px; }
.rrail { width: 20px; background: #dbe1f1; display: flex; flex-direction: column; align-items: center; gap: 1px; }
.rrail button { width: 18px; height: 18px; }
.rrail svg { stroke: #707a92; }
.rrail .on { border: 1px solid #5aa5dd; margin-top: 2px; }
.rmain { flex: 1; min-width: 0; display: flex; flex-direction: column; }
.rbar { display: flex; align-items: center; flex: none; height: 20px; padding: 0 3px; gap: 5px; background: #f8f9fd; white-space: nowrap; color: #333; font-size: 7px; font-weight: 500; }
.rbar svg { stroke: #999; }
.rbar .dark { stroke: #555; }
.rbar s { width: 1px; height: 12px; background: #ccc; }
.car { border: 2px solid transparent; border-top: 3px solid #222; border-bottom: 0; }
.car.dim { border-top-color: #999; }
.rsearch { display: flex; align-items: center; gap: 4px; width: 149px; height: 15px; padding-left: 3px; border: 1px solid #bbb; border-top-color: #777; border-left-color: #777; background: #fff; font-size: 8px; font-weight: 400; }
.rsearch svg { width: 9px; height: 9px; }
.seg { display: flex; height: 15px; font-weight: 700; }
.seg button { padding: 0 3px; background: #fff; }
.seg .sel { background: #0b6fcb; color: #fff; }
.acts { display: flex; align-items: center; gap: 2px; }
.acts svg { width: 12px; }
.grid { display: flex; flex: 1; min-height: 0; }
table { flex: 1; min-width: 0; height: 100%; table-layout: fixed; border-collapse: collapse; font-size: 7px; line-height: 9px; }
.c0 { width: 46px; } .c1 { width: 105px; } .c2 { width: 170px; } .c3 { width: 90px; } .c4 { width: 85px; } .c5 { width: 90px; }
th, td { padding: 0 2px; text-align: left; white-space: nowrap; overflow: hidden; border-right: 1px solid #dde2f4; border-bottom: 1px solid #dde2f4; background: #fff; }
th { height: 13px; background: #e4e9f8; color: #333; border-bottom: 2px solid #b5e8b3; }
th:first-child { border-bottom-color: #e4e9f8; }
td:first-child { background: #e8ebfa; text-align: right; }
td:nth-child(3) { color: #2a7d33; }
.gv { flex: none; flex-direction: column; width: 13px; padding: 2px 0; gap: 2px; }
.gv b { width: 10px; height: 11px; background: #cdcdcd; }
.gv svg:last-child { margin-top: auto; }
.gh { flex: none; justify-content: space-between; height: 11px; padding: 0 14px 0 2px; }
.gh svg { stroke: #aaa; }
.tool { line-height: 10px; }
```
